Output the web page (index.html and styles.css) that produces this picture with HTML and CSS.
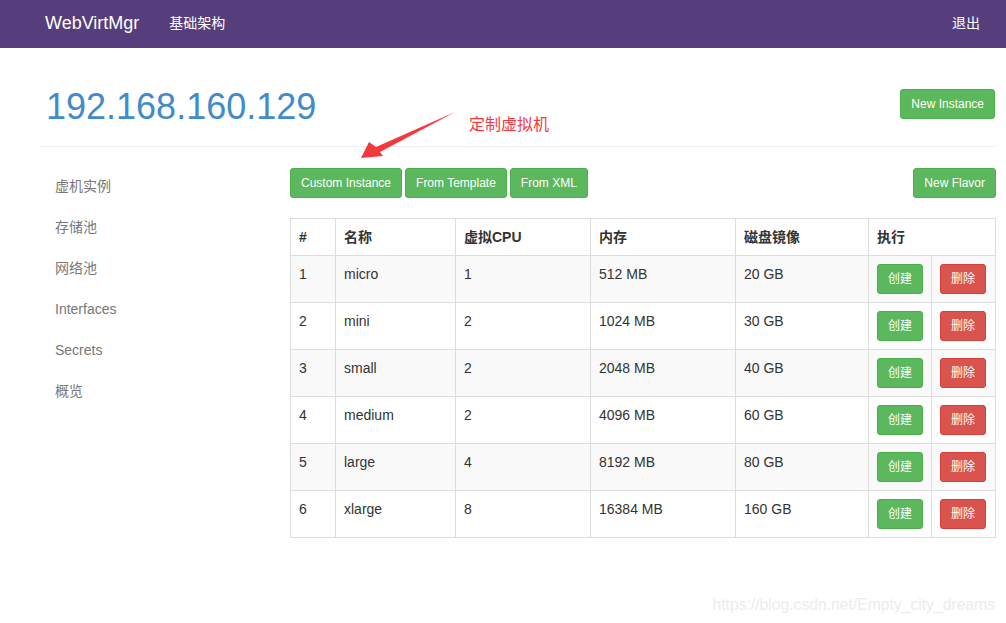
FILE: index.html
```html
<!DOCTYPE html>
<html lang="zh">
<head>
<meta charset="utf-8">
<title>WebVirtMgr</title>
<link rel="stylesheet" href="styles.css">
</head>
<body>
<nav class="navbar">
  <div class="nav-left">
    <a class="brand">WebVirtMgr</a>
    <a class="nav-link">基础架构</a>
  </div>
  <a class="nav-link nav-right">退出</a>
</nav>

<div class="main">
  <div class="page-header">
    <h1 class="title">192.168.160.129</h1>
    <button class="btn btn-success btn-sm header-btn">New Instance</button>
  </div>

  <div class="body-row">
    <ul class="sidebar">
      <li><a>虚机实例</a></li>
      <li><a>存储池</a></li>
      <li><a>网络池</a></li>
      <li><a>Interfaces</a></li>
      <li><a>Secrets</a></li>
      <li><a>概览</a></li>
    </ul>

    <div class="content">
      <div class="toolbar">
        <div class="btn-group">
          <button class="btn btn-success btn-sm">Custom Instance</button>
          <button class="btn btn-success btn-sm">From Template</button>
          <button class="btn btn-success btn-sm">From XML</button>
        </div>
        <button class="btn btn-success btn-sm">New Flavor</button>
      </div>

      <table class="flavors">
        <colgroup>
          <col class="c-num"><col class="c-name"><col class="c-cpu"><col class="c-mem"><col class="c-disk"><col class="c-act1"><col class="c-act2">
        </colgroup>
        <thead>
          <tr><th>#</th><th>名称</th><th>虚拟CPU</th><th>内存</th><th>磁盘镜像</th><th colspan="2">执行</th></tr>
        </thead>
        <tbody>
          <tr><td>1</td><td>micro</td><td>1</td><td>512 MB</td><td>20 GB</td><td><button class="btn btn-success btn-sm">创建</button></td><td><button class="btn btn-danger btn-sm">删除</button></td></tr>
          <tr><td>2</td><td>mini</td><td>2</td><td>1024 MB</td><td>30 GB</td><td><button class="btn btn-success btn-sm">创建</button></td><td><button class="btn btn-danger btn-sm">删除</button></td></tr>
          <tr><td>3</td><td>small</td><td>2</td><td>2048 MB</td><td>40 GB</td><td><button class="btn btn-success btn-sm">创建</button></td><td><button class="btn btn-danger btn-sm">删除</button></td></tr>
          <tr><td>4</td><td>medium</td><td>2</td><td>4096 MB</td><td>60 GB</td><td><button class="btn btn-success btn-sm">创建</button></td><td><button class="btn btn-danger btn-sm">删除</button></td></tr>
          <tr><td>5</td><td>large</td><td>4</td><td>8192 MB</td><td>80 GB</td><td><button class="btn btn-success btn-sm">创建</button></td><td><button class="btn btn-danger btn-sm">删除</button></td></tr>
          <tr><td>6</td><td>xlarge</td><td>8</td><td>16384 MB</td><td>160 GB</td><td><button class="btn btn-success btn-sm">创建</button></td><td><button class="btn btn-danger btn-sm">删除</button></td></tr>
        </tbody>
      </table>
    </div>
  </div>
</div>

<svg class="arrow" width="1006" height="623" viewBox="0 0 1006 623">
  <polygon points="361,158 369,142 376,147 455,112 380,152 383,156" fill="#f5383b"/>
</svg>
<div class="annotation">定制虚拟机</div>
<div class="watermark">https://blog.csdn.net/Empty_city_dreams</div>
</body>
</html>
```

FILE: styles.css
```css
* { box-sizing: border-box; }

html, body {
  margin: 0;
  padding: 0;
}

body {
  width: 1006px;
  height: 623px;
  overflow: hidden;
  position: relative;
  background: #fff;
  color: #333;
  font-family: "Liberation Sans", "Noto Sans CJK SC", sans-serif;
  font-size: 14px;
  line-height: 20px;
}

a { text-decoration: none; }

.navbar {
  height: 48px;
  background: #563d7c;
  display: flex;
  align-items: center;
  justify-content: space-between;
  padding: 0 26px 0 45px;
}

.nav-left {
  display: flex;
  align-items: center;
}

.brand {
  color: #fff;
  font-size: 18px;
  line-height: 20px;
  margin-top: -2px;
}

.nav-link {
  color: #fff;
  font-size: 14px;
  line-height: 20px;
  margin-top: -2px;
}

.nav-left .nav-link { margin-left: 30px; }

.main {
  padding: 0 11px 0 40px;
}

.page-header {
  margin-top: 39px;
  padding-bottom: 19px;
  border-bottom: 1px solid #eee;
  display: flex;
  justify-content: space-between;
  align-items: flex-start;
}

.title {
  margin: 0 0 0 6px;
  font-size: 36px;
  line-height: 40px;
  font-weight: 400;
  color: #428bca;
}

.header-btn { margin-top: 2px; }

.btn {
  display: inline-block;
  font-family: "Liberation Sans", "Noto Sans CJK SC", sans-serif;
  border: 1px solid transparent;
  cursor: pointer;
  white-space: nowrap;
}

.btn-sm {
  padding: 5px 10px;
  font-size: 12px;
  line-height: 18px;
  height: 30px;
  border-radius: 3px;
}

.btn-success {
  color: #fff;
  background: #5cb85c;
  border-color: #4cae4c;
}

.btn-danger {
  color: #fff;
  background: #d9534f;
  border-color: #d43f3a;
}

.body-row {
  display: flex;
  align-items: flex-start;
}

.sidebar {
  list-style: none;
  margin: 19px 0 0 0;
  padding: 0;
  width: 250px;
  flex: none;
}

.sidebar li { margin-bottom: 1px; }

.sidebar a {
  display: block;
  padding: 10px 15px;
  line-height: 20px;
  color: #777;
}

.content {
  flex: 1;
  padding-top: 21px;
}

.toolbar {
  display: flex;
  justify-content: space-between;
  align-items: flex-start;
}

.btn-group {
  display: flex;
  gap: 3px;
}

.flavors {
  margin-top: 20px;
  width: 705px;
  table-layout: fixed;
  border-collapse: collapse;
  border: 1px solid #ddd;
}

.c-num { width: 45px; }
.c-name { width: 120px; }
.c-cpu { width: 135px; }
.c-mem { width: 145px; }
.c-disk { width: 133px; }
.c-act1 { width: 63px; }
.c-act2 { width: 64px; }

.flavors th,
.flavors td {
  border: 1px solid #ddd;
  padding: 8px;
  text-align: left;
  vertical-align: top;
  line-height: 20px;
}

.flavors th { font-weight: 700; }

.flavors td { height: 47px; }

.flavors tbody tr:nth-child(odd) { background: #f9f9f9; }

.arrow {
  position: absolute;
  left: 0;
  top: 0;
  pointer-events: none;
}

.annotation {
  position: absolute;
  left: 469px;
  top: 115px;
  font-size: 16px;
  line-height: 20px;
  color: #f5383b;
}

.watermark {
  position: absolute;
  right: 11px;
  top: 595px;
  font-size: 15.7px;
  line-height: 20px;
  color: #ececec;
}
```
